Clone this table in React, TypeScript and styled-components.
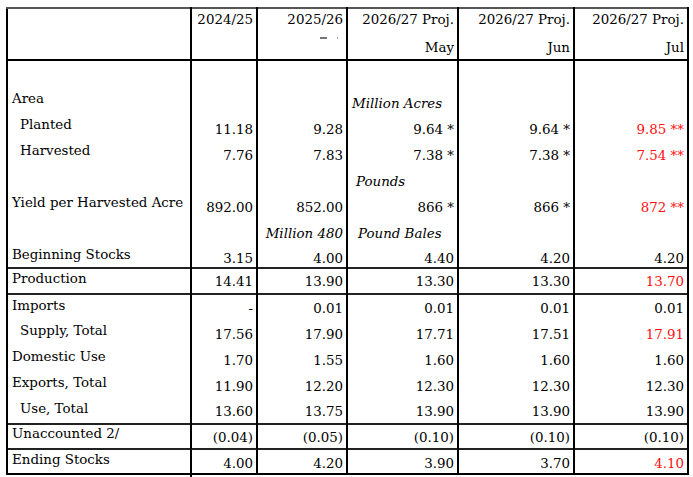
import React from 'react'
import styled, { createGlobalStyle } from 'styled-components'

type Cell = { text: string; red?: boolean; unit?: 'left' | 'right'; shift?: number }
type Row = { label: string; indent?: boolean; cells: Cell[] }

const GlobalStyle = createGlobalStyle`
  html, body {
    margin: 0;
    padding: 0;
    background: #fff;
  }
  body {
    font-family: 'DejaVu Serif', 'Liberation Serif', serif;
    color: #000;
  }
`

const v = (text: string, red = false): Cell => ({ text, red })
const blank = (): Cell => ({ text: '' })

const areaRows: Row[] = [
  { label: '', cells: [blank(), blank(), blank(), blank(), blank()] },
  { label: 'Area', cells: [blank(), blank(), { text: 'Million Acres', unit: 'left' }, blank(), blank()] },
  { label: 'Planted', indent: true, cells: [v('11.18'), v('9.28'), v('9.64 *'), v('9.64 *'), v('9.85 **', true)] },
  { label: 'Harvested', indent: true, cells: [v('7.76'), v('7.83'), v('7.38 *'), v('7.38 *'), v('7.54 **', true)] },
  { label: '', cells: [blank(), blank(), { text: 'Pounds', unit: 'left', shift: 4 }, blank(), blank()] },
  { label: 'Yield per Harvested Acre', cells: [v('892.00'), v('852.00'), v('866 *'), v('866 *'), v('872 **', true)] },
  { label: '', cells: [blank(), { text: 'Million 480', unit: 'right' }, { text: 'Pound Bales', unit: 'left', shift: 6 }, blank(), blank()] },
  { label: 'Beginning Stocks', cells: [v('3.15'), v('4.00'), v('4.40'), v('4.20'), v('4.20')] },
]

const supplyRows: Row[] = [
  { label: 'Imports', cells: [v('-'), v('0.01'), v('0.01'), v('0.01'), v('0.01')] },
  { label: 'Supply, Total', indent: true, cells: [v('17.56'), v('17.90'), v('17.71'), v('17.51'), v('17.91', true)] },
  { label: 'Domestic Use', cells: [v('1.70'), v('1.55'), v('1.60'), v('1.60'), v('1.60')] },
  { label: 'Exports, Total', cells: [v('11.90'), v('12.20'), v('12.30'), v('12.30'), v('12.30')] },
  { label: 'Use, Total', indent: true, cells: [v('13.60'), v('13.75'), v('13.90'), v('13.90'), v('13.90')] },
]

const headers = [
  { top: '2024/25', bottom: '' },
  { top: '2025/26', bottom: 'mark' },
  { top: '2026/27 Proj.', bottom: 'May' },
  { top: '2026/27 Proj.', bottom: 'Jun' },
  { top: '2026/27 Proj.', bottom: 'Jul' },
]

const widths = [184, 66, 90, 111, 116, 114]

const App = () => {
  const renderRows = (rows: Row[], h: number, labelTop: number, valueBottom: number, firstTop = false) =>
    rows.map((row, i) => (
      <BodyRow key={row.label + i} $h={h} $top={firstTop && i === 0}>
        <LabelCell $padTop={labelTop} $indent={!!row.indent}>
          {row.label}
        </LabelCell>
        {row.cells.map((cell, j) =>
          cell.unit ? (
            <UnitCell key={j} $align={cell.unit} $shift={cell.shift || 0} $padBottom={valueBottom}>
              {cell.text}
            </UnitCell>
          ) : (
            <ValueCell key={j} $red={!!cell.red} $padBottom={valueBottom}>
              {cell.text}
            </ValueCell>
          )
        )}
      </BodyRow>
    ))

  return (
    <Page>
      <GlobalStyle />
      <Table>
        <colgroup>
          {widths.map((w, i) => (
            <col key={i} style={{ width: w }} />
          ))}
        </colgroup>
        <thead>
          <HeadRow>
            <HeadCell />
            {headers.map((h, i) => (
              <HeadCell key={i}>
                <HeadLine>{h.top}</HeadLine>
                <SubLine>
                  {h.bottom === 'mark' ? (
                    <Marks>
                      <Dash />
                      <Dot />
                    </Marks>
                  ) : (
                    h.bottom
                  )}
                </SubLine>
              </HeadCell>
            ))}
          </HeadRow>
        </thead>
        <tbody>
          {renderRows(areaRows, 26, 5, 0)}
          {renderRows(
            [{ label: 'Production', cells: [v('14.41'), v('13.90'), v('13.30'), v('13.30'), v('13.70', true)] }],
            26,
            2,
            3,
            true
          )}
          {renderRows(supplyRows, 26, 3, 3, true)}
          {renderRows(
            [{ label: 'Unaccounted 2/', cells: [v('(0.04)'), v('(0.05)'), v('(0.10)'), v('(0.10)'), v('(0.10)')] }],
            25,
            1,
            2,
            true
          )}
          {renderRows(
            [{ label: 'Ending Stocks', cells: [v('4.00'), v('4.20'), v('3.90'), v('3.70'), v('4.10', true)] }],
            25,
            2,
            1,
            true
          )}
        </tbody>
      </Table>
      <Tick />
    </Page>
  )
}

const Page = styled.div`
  padding: 7px 0 0 6px;
`

const Table = styled.table`
  border-collapse: collapse;
  table-layout: fixed;
  width: 683px;
  border: 2px solid #000;
  font-size: 13.4px;
  line-height: 16px;
`

const HeadRow = styled.tr`
  height: 52px;
`

const HeadCell = styled.th`
  border: 2px solid #000;
  border-top-color: #555;
  vertical-align: top;
  text-align: right;
  font-weight: normal;
  padding: 3px 3px 0 4px;
  white-space: nowrap;
`

const HeadLine = styled.div`
  height: 16px;
`

const SubLine = styled.div`
  height: 16px;
  margin-top: 12px;
`

const Marks = styled.div`
  display: flex;
  justify-content: flex-end;
  align-items: center;
  gap: 10px;
  height: 4px;
  margin: -4px 5px 0 0;
`

const Dash = styled.span`
  width: 7px;
  height: 1.5px;
  background: #777;
`

const Dot = styled.span`
  width: 1px;
  height: 1.5px;
  background: #aaa;
`

const BodyRow = styled.tr<{ $h: number; $top: boolean }>`
  height: ${({ $h }) => $h}px;
  border-top: ${({ $top }) => ($top ? '2px solid #222' : 'none')};
`

const BaseCell = styled.td`
  border-left: 2px solid #000;
  border-right: 2px solid #000;
  white-space: nowrap;
  padding: 0 3px 0 4px;
`

const LabelCell = styled(BaseCell)<{ $padTop: number; $indent: boolean }>`
  vertical-align: top;
  padding-top: ${({ $padTop }) => $padTop}px;
  padding-left: ${({ $indent }) => ($indent ? 12 : 4)}px;
`

const ValueCell = styled(BaseCell)<{ $red: boolean; $padBottom: number }>`
  vertical-align: bottom;
  text-align: right;
  padding-bottom: ${({ $padBottom }) => $padBottom}px;
  color: ${({ $red }) => ($red ? '#ff1010' : '#000')};
`

const UnitCell = styled(BaseCell)<{ $align: 'left' | 'right'; $shift: number; $padBottom: number }>`
  vertical-align: bottom;
  font-style: italic;
  text-align: ${({ $align }) => $align};
  padding-left: ${({ $shift }) => 4 + $shift}px;
  padding-bottom: ${({ $padBottom }) => $padBottom}px;
`

const Tick = styled.div`
  width: 2px;
  height: 5px;
  margin-left: 184px;
  background: #000;
`

export default App
